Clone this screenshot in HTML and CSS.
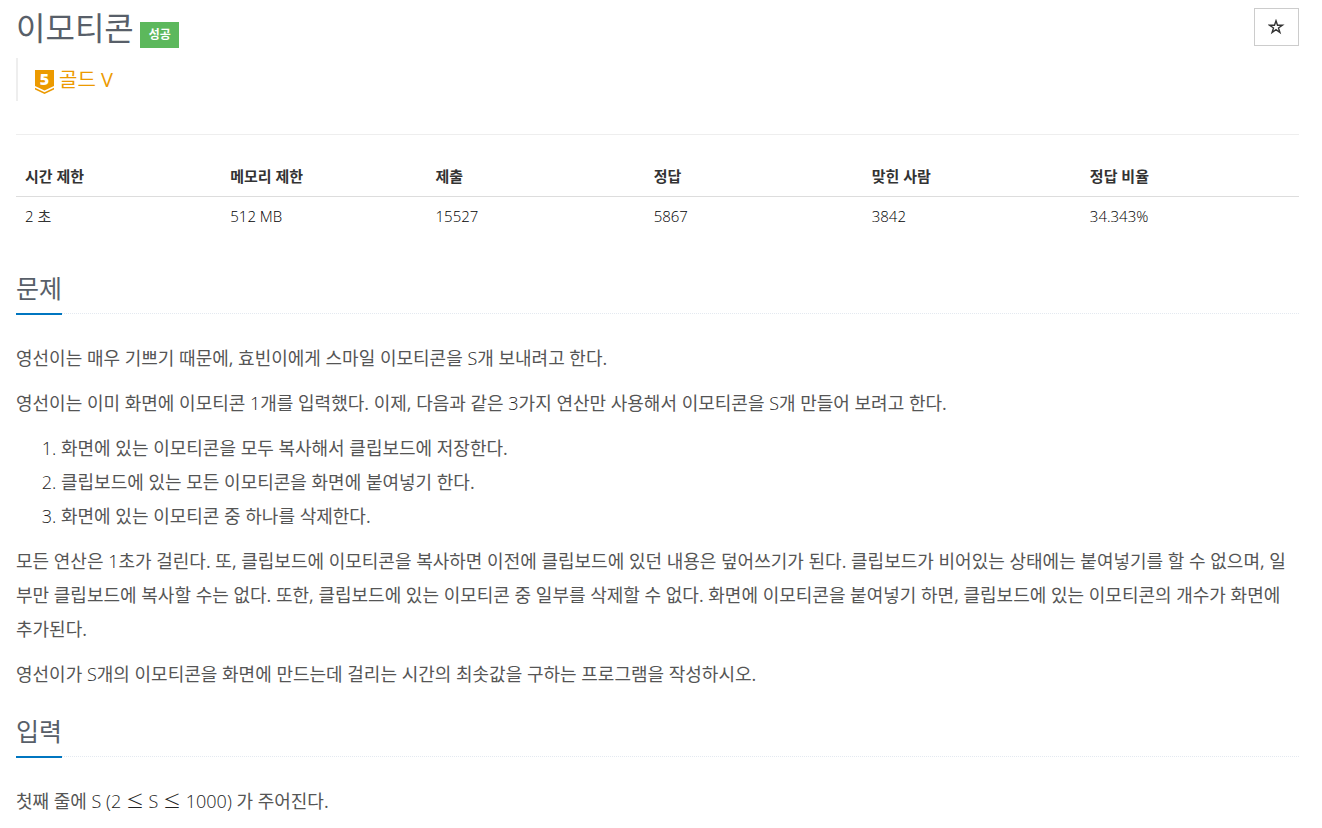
FILE: index.html
```html
<!DOCTYPE html>
<html lang="ko">
<head>
<meta charset="utf-8">
<title>이모티콘</title>
<link rel="stylesheet" href="styles.css">
</head>
<body>
<main class="page">
  <header class="header">
    <div class="title-row">
      <h1 class="title">이모티콘</h1>
      <span class="badge">성공</span>
    </div>
    <button class="star" type="button" aria-label="즐겨찾기">
      <svg width="17" height="16" viewBox="0 0 17 16"><path d="M8 1.800l1.500 4.400h4.900l-3.900 2.800 1.400 4.500L8 10.700l-3.900 2.800 1.400-4.500L1.600 6.200h4.900z" fill="none" stroke="#333" stroke-width="1.400"/></svg>
    </button>
  </header>
  <blockquote class="tier">
    <svg class="tier-icon" width="19" height="24" viewBox="0 0 19 24"><path d="M0 0h19v16l-9.500 4.500L0 16z" fill="#ec9a00"/><path d="M0 17.800l9.500 4.400 9.500-4.400v1.800l-9.500 4.400L0 19.600z" fill="#ec9a00"/><text x="9.500" y="15" text-anchor="middle" class="tier-number">5</text></svg>
    <span>골드 V</span>
  </blockquote>
  <hr class="divider">
  <table class="info">
    <thead><tr><th>시간 제한</th><th>메모리 제한</th><th>제출</th><th>정답</th><th>맞힌 사람</th><th>정답 비율</th></tr></thead>
    <tbody><tr><td><span class="light">2</span> 초</td><td class="light">512 MB</td><td class="light">15527</td><td class="light">5867</td><td class="light">3842</td><td class="light">34.343%</td></tr></tbody>
  </table>
  <section class="section">
    <div class="headline"><h2>문제</h2></div>
    <div class="text">
      <p>영선이는 매우 기쁘기 때문에, 효빈이에게 스마일 이모티콘을 <span class="light">S</span>개 보내려고 한다.</p>
      <p>영선이는 이미 화면에 이모티콘 <span class="light">1</span>개를 입력했다. 이제, 다음과 같은 <span class="light">3</span>가지 연산만 사용해서 이모티콘을 <span class="light">S</span>개 만들어 보려고 한다.</p>
      <ol>
        <li>화면에 있는 이모티콘을 모두 복사해서 클립보드에 저장한다.</li>
        <li>클립보드에 있는 모든 이모티콘을 화면에 붙여넣기 한다.</li>
        <li>화면에 있는 이모티콘 중 하나를 삭제한다.</li>
      </ol>
      <p>모든 연산은 <span class="light">1</span>초가 걸린다. 또, 클립보드에 이모티콘을 복사하면 이전에 클립보드에 있던 내용은 덮어쓰기가 된다. 클립보드가 비어있는 상태에는 붙여넣기를 할 수 없으며, 일부만 클립보드에 복사할 수는 없다. 또한, 클립보드에 있는 이모티콘 중 일부를 삭제할 수 없다. 화면에 이모티콘을 붙여넣기 하면, 클립보드에 있는 이모티콘의 개수가 화면에 추가된다.</p>
      <p>영선이가 <span class="light">S</span>개의 이모티콘을 화면에 만드는데 걸리는 시간의 최솟값을 구하는 프로그램을 작성하시오.</p>
    </div>
  </section>
  <section class="section">
    <div class="headline"><h2>입력</h2></div>
    <div class="text"><p>첫째 줄에 <span class="light">S (2 <span class="math">≤</span> S <span class="math">≤</span> 1000)</span> 가 주어진다.</p></div>
  </section>
</main>
</body>
</html>
```
FILE: styles.css
```css
* { box-sizing: border-box; }
body {
  margin: 0;
  background: #fff;
  color: #333;
  font-family: "Open Sans", "Noto Sans CJK KR", sans-serif;
  font-size: 15px;
  line-height: 20px;
}
.light, li::marker { font-weight: 300; color: #222; }
.math { font-family: "Noto Sans CJK KR", sans-serif; line-height: 1; }
.page { padding: 8px 23px 0 16px; }
.header { display: flex; justify-content: space-between; align-items: flex-start; margin-bottom: 10px; }
.title-row { display: flex; align-items: flex-start; gap: 6px; }
.title { margin: 0; font-size: 32px; line-height: 40px; font-weight: 400; color: #585f69; }
.badge { margin-top: 14px; padding: 0 8px 0 9px; background: #5cb85c; color: #fff; font-size: 12px; line-height: 26px; font-weight: 700; }
.star { display: flex; align-items: center; justify-content: center; width: 45px; height: 38px; padding: 0; border: 1px solid #ccc; background: #fff; }
.tier { display: flex; align-items: center; gap: 5px; height: 43px; margin: 0 0 33px; padding-left: 17px; border-left: 2px solid #eee; color: #ec9a00; font-size: 20px; }
.tier-icon { margin-top: 5px; overflow: visible; }
.tier-number { fill: #fff; font-size: 16px; font-weight: 800; }
.divider { margin: 0 0 21px; border: 0; border-top: 1px solid #eee; }
.info { width: 100%; margin-bottom: 35px; border-collapse: collapse; table-layout: fixed; }
.info th, .info td { padding: 10px 9px; text-align: left; }
.info td { padding-top: 9px; }
.info .light { color: #000; }
.info th { border-bottom: 1px solid #ddd; }
.info th:nth-child(-n+2) { width: 16%; }
.section { margin-bottom: 23px; }
.headline { display: flex; border-bottom: 1px dotted #e4e9f0; }
.headline h2 { margin: 0 0 -2px; padding-bottom: 8px; border-bottom: 2px solid #0076c0; color: #585f69; font-size: 25px; line-height: 34px; font-weight: 400; }
.text { padding-top: 27px; color: #555; font-size: 18px; line-height: 34px; }
.text p { margin: 0 0 11px; }
.text ol { margin: 0 0 11px; padding-left: 45px; }
```
